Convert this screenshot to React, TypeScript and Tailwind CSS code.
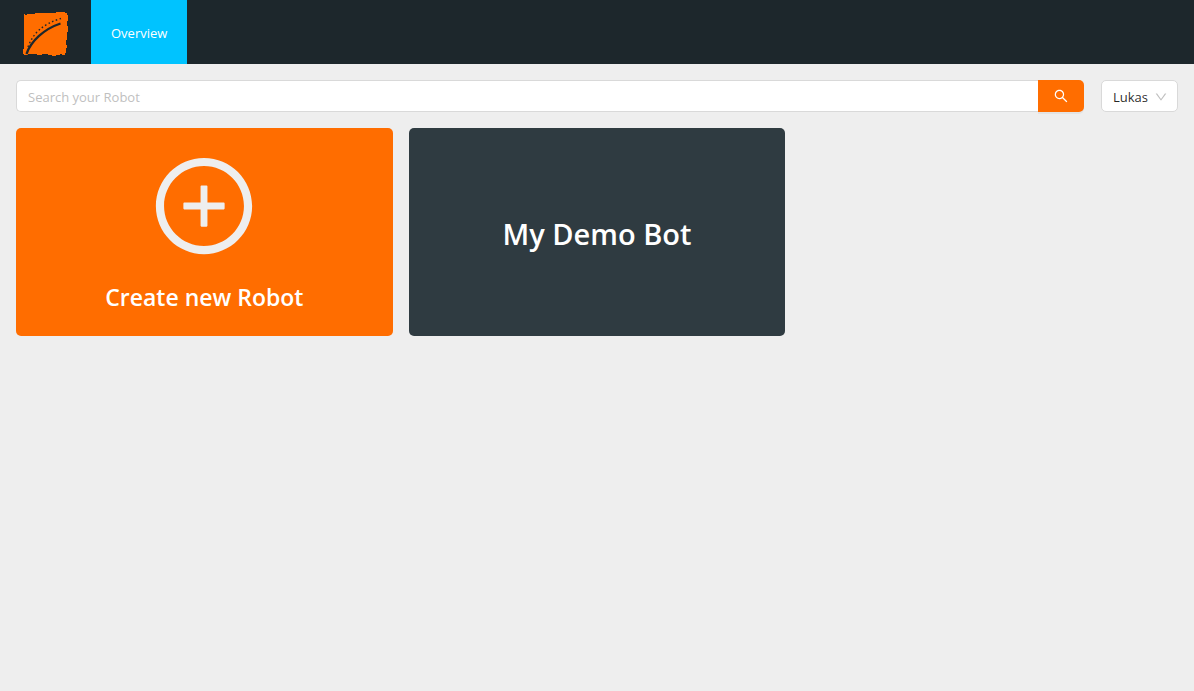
import { useState } from "react";
import { AiOutlineDown, AiOutlinePlusCircle, AiOutlineSearch } from "react-icons/ai";

const robots = ["My Demo Bot"];

function Logo() {
  return (
    <svg viewBox="0 0 70 60" className="h-[60px] w-[70px]" aria-label="Logo" role="img">
      <path
        d="M14 10H15V11H17V10H25V9H46V8H55V9H57V11H58V17H57V22H58V28H57V36H56V41H57V44H56V49H55V51H52V50H50V51H46V52H42V51H38V50H32V51H27V50H18V51H14V50H13V45H14Z"
        fill="#ff6d00"
      />
      <path d="M16.500 50C21 37 34 25 50.500 19.500" fill="none" stroke="#1d272c" strokeWidth="2.300" />
      <path
        d="M18 43C23 29 33 20 51 14.500"
        fill="none"
        stroke="#1d272c"
        strokeWidth="1.400"
        strokeDasharray="1.600 2.400"
      />
    </svg>
  );
}

function Header() {
  return (
    <header className="flex h-16 bg-[#1d272c]">
      <a href="#home" className="flex items-center px-2.5 pt-1">
        <Logo />
      </a>
      <nav className="flex">
        <a
          href="#overview"
          className="ml-px flex items-center bg-[#00c3ff] px-5 pt-1 text-[13px] text-white"
          aria-current="page"
        >
          Overview
        </a>
      </nav>
    </header>
  );
}

export default function App() {
  const [query, setQuery] = useState("");
  const visible = robots.filter((name) => name.toLowerCase().includes(query.toLowerCase()));

  return (
    <div className="min-h-screen bg-[#eeeeee] font-['Open_Sans','Noto_Sans',sans-serif]">
      <Header />
      <main className="p-4">
        <div className="flex gap-[17px]">
          <form className="flex h-8 grow" role="search" onSubmit={(e) => e.preventDefault()}>
            <input
              type="text"
              aria-label="Search your Robot"
              placeholder="Search your Robot"
              value={query}
              onChange={(e) => setQuery(e.target.value)}
              className="min-w-0 grow rounded-l-[5px] border border-r-0 border-[#d9d9d9] bg-white px-[11px] pt-1 text-[13px] text-black/85 outline-none placeholder:text-[#bfbfbf]"
            />
            <button
              type="submit"
              aria-label="Search"
              className="flex w-[46px] items-center justify-center rounded-r-[5px] bg-[#ff6d00] text-white shadow-[0_2px_0_rgba(0,0,0,0.045)]"
            >
              <AiOutlineSearch size={16} />
            </button>
          </form>
          <div className="relative">
            <select
              aria-label="User"
              className="h-8 w-[77px] appearance-none rounded-[5px] border border-[#d9d9d9] bg-white pt-1 pr-6 pl-[11px] text-[13px] text-black/85 outline-none"
            >
              <option>Lukas</option>
            </select>
            <AiOutlineDown
              size={14}
              className="pointer-events-none absolute top-2.5 right-2.5 text-[#bfbfbf]"
            />
          </div>
        </div>
        <div className="mt-4 grid grid-cols-3 gap-4">
          <button
            type="button"
            className="flex h-52 flex-col items-center rounded-[5px] bg-[#ff6d00] pt-[23px] text-[23px] leading-8 font-semibold text-white"
          >
            <AiOutlinePlusCircle size={110} className="text-[#eeeeee]" />
            <span className="mt-5">Create new Robot</span>
          </button>
          {visible.map((name) => (
            <a
              key={name}
              href="#robot"
              className="flex h-52 items-center justify-center rounded-[5px] bg-[#2f3b41] pt-1 text-[29px] leading-9 font-semibold text-white"
            >
              {name}
            </a>
          ))}
        </div>
      </main>
    </div>
  );
}
